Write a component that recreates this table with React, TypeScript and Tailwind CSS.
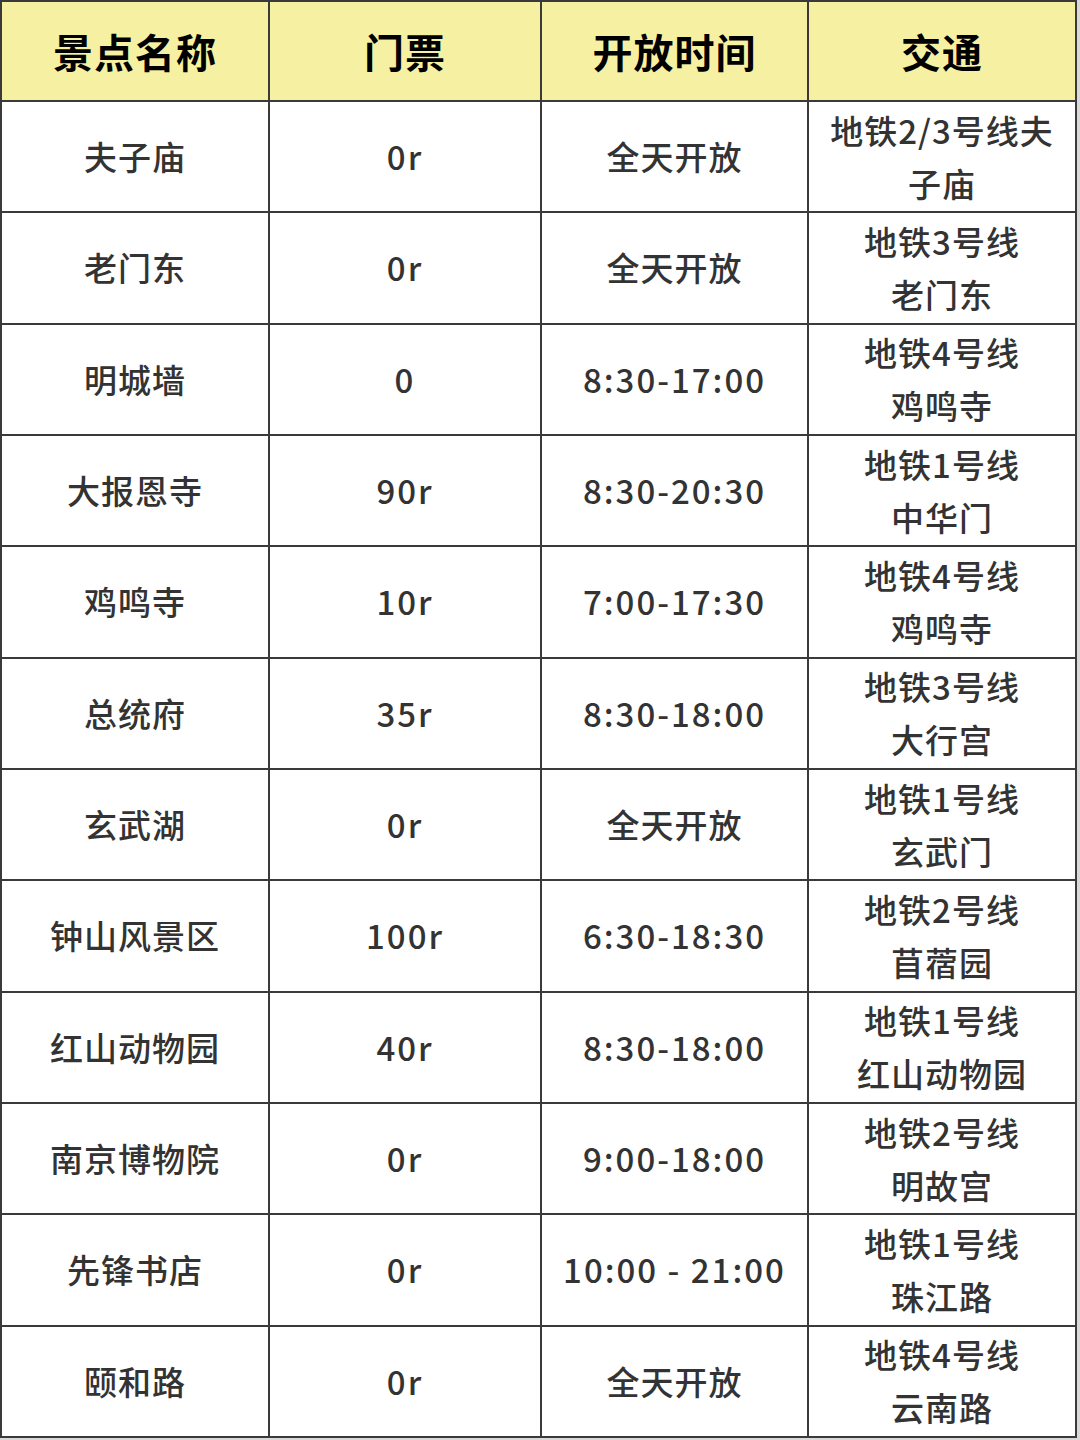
// 南京景点一览表 — 名称 · 门票 · 开放时间 · 交通
const rows: [string, string, string, string][] = [
  ["夫子庙", "0r", "全天开放", "地铁2/3号线夫\n子庙"],
  ["老门东", "0r", "全天开放", "地铁3号线\n老门东"],
  ["明城墙", "0", "8:30-17:00", "地铁4号线\n鸡鸣寺"],
  ["大报恩寺", "90r", "8:30-20:30", "地铁1号线\n中华门"],
  ["鸡鸣寺", "10r", "7:00-17:30", "地铁4号线\n鸡鸣寺"],
  ["总统府", "35r", "8:30-18:00", "地铁3号线\n大行宫"],
  ["玄武湖", "0r", "全天开放", "地铁1号线\n玄武门"],
  ["钟山风景区", "100r", "6:30-18:30", "地铁2号线\n苜蓿园"],
  ["红山动物园", "40r", "8:30-18:00", "地铁1号线\n红山动物园"],
  ["南京博物院", "0r", "9:00-18:00", "地铁2号线\n明故宫"],
  ["先锋书店", "0r", "10:00 - 21:00", "地铁1号线\n珠江路"],
  ["颐和路", "0r", "全天开放", "地铁4号线\n云南路"],
];

const headers = ["景点名称", "门票", "开放时间", "交通"];

// 纯数字/时间的格子字距放宽一点
const isNumeric = (s: string) => /^[0-9r:\- ]+$/.test(s);

export default function App() {
  return (
    <div className="w-[1080px] h-[1440px] bg-[#d9d9d9] font-['Noto_Sans_CJK_SC','Noto_Sans',sans-serif]">
      <div className="w-[1077px] h-[1438px] bg-[#3a3a3a] p-[2px] grid grid-cols-[266px_270px_265px_266px] grid-rows-[98px_repeat(12,1fr)] gap-[2px]">
        {headers.map((h) => (
          <div key={h} className="bg-[#f6f0a2] flex items-center justify-center text-[40px] font-bold text-black tracking-[1px]">{h}</div>
        ))}
        {rows.map((r, i) =>
          r.map((c, j) => (
            <div
              key={`${i}-${j}`}
              className={`bg-white flex items-center justify-center text-center text-[33px] font-medium text-[#333333] leading-[53px] whitespace-pre-line ${isNumeric(c) ? "tracking-[2px]" : "tracking-[1px]"}`}
            >
              {c}
            </div>
          ))
        )}
      </div>
    </div>
  );
}
